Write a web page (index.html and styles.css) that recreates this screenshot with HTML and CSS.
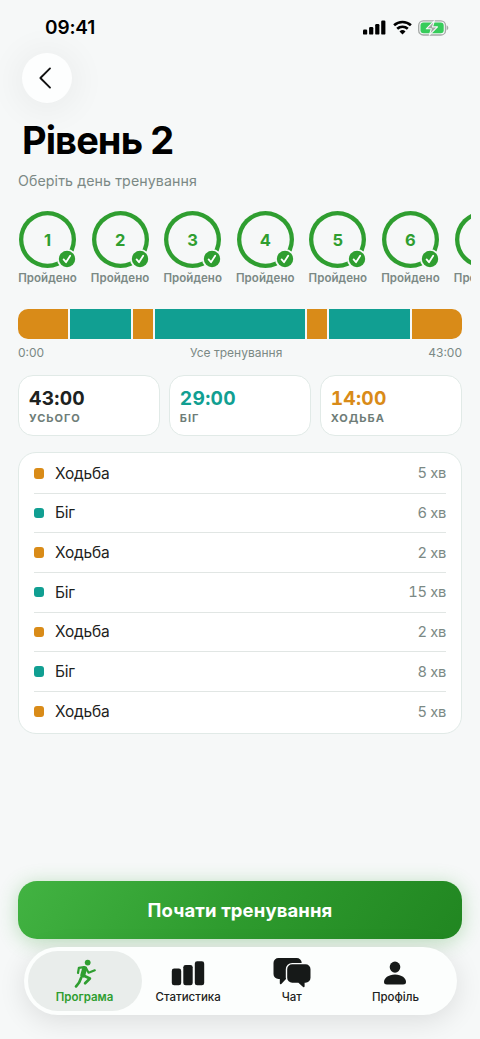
FILE: index.html
```html
<!DOCTYPE html>
<html lang="uk">
<head>
<meta charset="utf-8">
<meta name="viewport" content="width=device-width, initial-scale=1">
<title>Рівень 2</title>
<link rel="stylesheet" href="styles.css">
</head>
<body>
<svg width="0" height="0" class="defs">
  <symbol id="check" viewBox="0 0 18 18"><circle cx="9" cy="9" r="8.2" fill="#2f9e30"/><path d="M5.6 9.4l2.4 2.8 4.2-6.4" fill="none" stroke="#fff" stroke-width="1.8" stroke-linecap="round" stroke-linejoin="round"/></symbol>
</svg>
<div class="screen">
  <header class="status">
    <span class="clock">09:41</span>
    <div class="status-icons">
      <svg width="23" height="15" viewBox="0 0 23 15"><rect x="0" y="9.6" width="4.2" height="5" rx="1.2"/><rect x="6.1" y="7" width="4.2" height="7.6" rx="1.2"/><rect x="12.2" y="4" width="4.2" height="10.6" rx="1.2"/><rect x="18.2" y="0.6" width="4.2" height="14" rx="1.2"/></svg>
      <svg width="19" height="15" viewBox="0 0 19 15"><g fill="none" stroke="#000" stroke-width="2.6"><path d="M1.1 5.3a12.2 12.2 0 0 1 16.8 0"/><path d="M4.2 8.8a7.7 7.7 0 0 1 10.6 0"/></g><path d="M9.5 14.4l3-3a4.3 4.3 0 0 0-6 0z"/></svg>
      <svg width="31" height="16" viewBox="0 0 31 16"><rect x=".7" y=".8" width="26.8" height="14.2" rx="4.6" fill="none" stroke="#a4a8a6" stroke-width="1.3"/><path d="M28.7 5.6c2.1.7 2.1 3.9 0 4.6z" fill="#a4a8a6"/><rect x="2.5" y="2.6" width="23.2" height="10.6" rx="3" fill="#37cc5b"/><path d="M16.5.7L8.3 8.8h5l-2 6.4 8.2-8.3h-5z" fill="#a4a8a6" stroke="#f7f9f9" stroke-width="1.1" stroke-linejoin="round"/></svg>
    </div>
  </header>

  <button class="back" aria-label="Назад"><svg width="14" height="24" viewBox="0 0 14 24"><path d="M12 2.4L2.4 12 12 21.6" fill="none" stroke="#111" stroke-width="1.9" stroke-linecap="round" stroke-linejoin="round"/></svg></button>
  <h1 class="title">Рівень 2</h1>
  <p class="subtitle">Оберіть день тренування</p>

  <div class="days">
    <div class="day"><div class="ring">1<svg class="badge"><use href="#check"/></svg></div><span class="day-label">Пройдено</span></div>
    <div class="day"><div class="ring">2<svg class="badge"><use href="#check"/></svg></div><span class="day-label">Пройдено</span></div>
    <div class="day"><div class="ring">3<svg class="badge"><use href="#check"/></svg></div><span class="day-label">Пройдено</span></div>
    <div class="day"><div class="ring">4<svg class="badge"><use href="#check"/></svg></div><span class="day-label">Пройдено</span></div>
    <div class="day"><div class="ring">5<svg class="badge"><use href="#check"/></svg></div><span class="day-label">Пройдено</span></div>
    <div class="day"><div class="ring">6<svg class="badge"><use href="#check"/></svg></div><span class="day-label">Пройдено</span></div>
    <div class="day"><div class="ring"></div><span class="day-label">Пройдено</span></div>
  </div>

  <div class="timeline">
    <i class="walk" style="flex-grow:5"></i><i class="run" style="flex-grow:6"></i><i class="walk" style="flex-grow:2"></i><i class="run" style="flex-grow:15"></i><i class="walk" style="flex-grow:2"></i><i class="run" style="flex-grow:8"></i><i class="walk" style="flex-grow:5"></i>
  </div>
  <div class="scale"><span>0:00</span><span>Усе тренування</span><span>43:00</span></div>

  <div class="stats">
    <div class="stat"><b>43:00</b><small>УСЬОГО</small></div>
    <div class="stat stat-run"><b>29:00</b><small>БІГ</small></div>
    <div class="stat stat-walk"><b>14:00</b><small>ХОДЬБА</small></div>
  </div>

  <ul class="steps">
    <li><i class="walk"></i><span>Ходьба</span><em>5 хв</em></li>
    <li><i class="run"></i><span>Біг</span><em>6 хв</em></li>
    <li><i class="walk"></i><span>Ходьба</span><em>2 хв</em></li>
    <li><i class="run"></i><span>Біг</span><em>15 хв</em></li>
    <li><i class="walk"></i><span>Ходьба</span><em>2 хв</em></li>
    <li><i class="run"></i><span>Біг</span><em>8 хв</em></li>
    <li><i class="walk"></i><span>Ходьба</span><em>5 хв</em></li>
  </ul>

  <div class="bottom">
    <button class="start">Почати тренування</button>
    <nav class="tabs">
      <a class="tab active"><svg width="24" height="30" viewBox="0 0 24 30"><circle cx="14.7" cy="3.6" r="2.9" fill="#2f9e30"/><g fill="none" stroke="#2f9e30" stroke-linecap="round" stroke-linejoin="round"><path d="M5 14l.9-5.2 5.2-.7" stroke-width="2.2"/><path d="M11.6 9.7L9.8 16.2" stroke-width="5"/><path d="M12.8 8.7l2.8 5 6.2-2.4" stroke-width="2.2"/><path d="M10.5 16.5l6.4 3-4.8 4.8" stroke-width="2.7"/><path d="M8.1 18.8C7.1 22.4 5.6 25 3 27.4" stroke-width="2.7"/></g></svg><span>Програма</span></a>
      <a class="tab"><svg width="34" height="30" viewBox="0 0 34 30"><rect x=".8" y="9.5" width="9.4" height="16.8" rx="2.4"/><rect x="12.3" y="5.9" width="9.4" height="20.4" rx="2.4"/><rect x="23.8" y="2.3" width="9.4" height="24" rx="2.4"/></svg><span>Статистика</span></a>
      <a class="tab"><svg width="38" height="32" viewBox="0 0 38 32"><path d="M5.5 1h18.2a5 5 0 0 1 5 5v11a5 5 0 0 1-5 5H13l-4.7 4.9c-.7.6-1.5.3-1.5-.7V22H5.5a5 5 0 0 1-5-5V6a5 5 0 0 1 5-5z"/><path d="M19.2 7.3h13.3a5 5 0 0 1 5 5v8.4a5 5 0 0 1-5 5h-.9v3.5c0 1-.8 1.3-1.5.7L25.4 25.7h-6.2a5 5 0 0 1-5-5v-8.4a5 5 0 0 1 5-5z" stroke="#fcfefd" stroke-width="2.8" paint-order="stroke"/></svg><span>Чат</span></a>
      <a class="tab"><svg width="24" height="30" viewBox="0 0 24 30"><ellipse cx="12" cy="8.1" rx="5.3" ry="5.6"/><path d="M1 22.9c0-3.5 4.2-7.3 11-7.3s11 3.8 11 7.3c0 1.7-1.1 2.5-2.9 2.5H3.9C2.1 25.4 1 24.6 1 22.9z"/></svg><span>Профіль</span></a>
    </nav>
  </div>
</div>
</body>
</html>
```
FILE: styles.css
```css
* { box-sizing: border-box; }
body { margin: 0; background: #f6f8f8; font-family: Inter, "Noto Sans", sans-serif; color: #1d2221; }
button { border: 0; padding: 0; font-family: inherit; }
.defs { display: block; }
.screen { width: 480px; height: 1039px; overflow: hidden; display: flex; flex-direction: column; }

.status { flex: none; height: 52.5px; padding: 14px 31px 0 45px; display: flex; justify-content: space-between; }
.clock { font-size: 19px; line-height: 27px; font-weight: 600; color: #000; letter-spacing: -.15px; }
.status-icons { display: flex; gap: 6.5px; padding-top: 5.5px; height: 21.5px; }

.back { flex: none; width: 50px; height: 50px; margin-left: 22px; border-radius: 50%; background: #fdfefe; display: grid; place-items: center; box-shadow: 0 3px 32px 8px rgba(0,0,0,.045); }
.back svg { margin-right: 4px; }

.title { flex: none; margin: 12.5px 0 0 22px; font-size: 38px; line-height: 50px; font-weight: 700; letter-spacing: -.9px; color: #000; }
.subtitle { flex: none; margin: 5px 0 0 18px; font-size: 14.2px; line-height: 21px; color: #7b8985; letter-spacing: .1px; }

.days { flex: none; margin: 20px 9px 0 17px; height: 80px; display: flex; gap: 12.6px; overflow: hidden; padding-left: .5px; }
.day { flex: none; width: 60px; display: flex; flex-direction: column; align-items: center; }
.ring { position: relative; flex: none; width: 57px; height: 57px; box-shadow: inset 0 0 0 4.3px #2f9e30; border-radius: 50%; display: grid; place-items: center; font-size: 16.5px; font-weight: 700; color: #2f9e30; }
.badge { position: absolute; right: 0; bottom: 0; width: 18px; height: 18px; border-radius: 50%; background: #f6f8f8; box-shadow: 0 0 0 1px #f6f8f8; }
.day-label { margin-top: 2px; font-size: 11.5px; line-height: 16px; font-weight: 600; color: #7b8985; letter-spacing: .05px; }

.timeline { flex: none; margin: 18px 18px 0; height: 29.5px; display: flex; gap: 2px; border-radius: 10px; overflow: hidden; }
.timeline i { flex-basis: 0; }
.walk { background: #d98b18; }
.run { background: #119f92; }
.scale { flex: none; margin: 5px 18px 0; display: flex; justify-content: space-between; font-size: 12px; line-height: 18px; color: #7b8985; letter-spacing: 0; }

.stats { flex: none; margin: 13.5px 18px 0; display: grid; grid-template-columns: repeat(3, 1fr); gap: 8.5px; }
.stat { height: 61px; padding: 10px 10px; background: #fff; border: 1px solid #e1eae7; border-radius: 15px; display: flex; flex-direction: column; }
.stat b { font-size: 19.2px; line-height: 24px; font-weight: 700; font-variant-numeric: tabular-nums; letter-spacing: .25px; }
.stat small { font-size: 11px; line-height: 16px; font-weight: 700; letter-spacing: 1px; color: #6e7d78; }
.stat-run b { color: #119f92; }
.stat-walk b { color: #d98b18; }

.steps { flex: none; list-style: none; margin: 15.5px 18px 0; padding: 1.5px 15px 0 14.5px; height: 282px; background: #fff; border: 1px solid #e1eae7; border-radius: 18px; }
.steps li { height: 39.65px; display: flex; align-items: center; border-bottom: 1px solid #e1e6e4; font-size: 15.5px; letter-spacing: -.2px; }
.steps li:last-child { border-bottom: 0; }
.steps i { width: 10.5px; height: 10.5px; border-radius: 3px; margin-right: 11px; }
.steps em { margin-left: auto; font-style: normal; font-size: 14.7px; color: #7b8985; letter-spacing: -.3px; font-variant-numeric: tabular-nums; }

.bottom { margin: auto 18px 24px; }
.start { display: block; width: 444px; height: 58.5px; border-radius: 19px; background: linear-gradient(125deg, #42b342 0%, #2e9b2e 50%, #218621 100%); color: #fff; font-size: 18.5px; font-weight: 700; letter-spacing: .12px; box-shadow: 0 3px 20px rgba(47,158,48,.3); }
.tabs { position: relative; margin: 8px 5.5px 0; height: 68px; border-radius: 34px; padding: 4px; background: #fcfefd; display: flex; justify-content: space-between; box-shadow: 0 6px 28px rgba(0,0,0,.11); }
.tab { width: 114px; margin-right: -11px; height: 60px; border-radius: 30px; display: grid; grid-template-rows: 37.5px 17px; justify-items: center; align-items: end; font-size: 11.5px; line-height: 17px; font-weight: 500; letter-spacing: 0; fill: #161918; }
.tab:last-child { margin-right: 0; }
.tab span { align-self: center; }
.active { background: #e9edeb; color: #2f9e30; font-weight: 600; }
```
